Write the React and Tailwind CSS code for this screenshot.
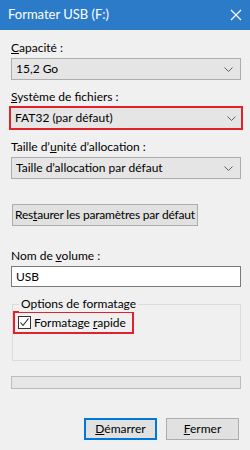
import React from 'react';

const FONT = { fontFamily: 'Lato, "Noto Sans", sans-serif' };

function Chevron() {
  return (
    <svg width="9" height="5" viewBox="0 0 9 5" className="shrink-0">
      <path d="M0.5 0.5 L4.5 4.5 L8.5 0.5" fill="none" stroke="#606060" strokeWidth="1" />
    </svg>
  );
}

function Combo({ children }) {
  return (
    <div className="flex h-[22px] items-center justify-between border border-[#adadad] bg-[#e5e5e5] pl-[4px] pr-[7px] text-[12px] text-black">
      <span className="whitespace-nowrap">{children}</span>
      <Chevron />
    </div>
  );
}

function Label({ children, className = '' }) {
  return <div className={`h-[16px] whitespace-nowrap text-[12px] leading-[16px] text-black ${className}`}>{children}</div>;
}

export default function App() {
  return (
    <div className="flex h-[450px] w-[250px] flex-col bg-[#f0f0f0]" style={FONT}>
      {/* Barre de titre */}
      <div className="flex h-[30px] items-center justify-between bg-[#2b7bc9] pl-[8px] pr-[8px] text-white">
        <span className="text-[13px]">Formater USB (F:)</span>
        <svg width="12" height="12" viewBox="0 0 12 12">
          <path d="M1 1 L11 11 M11 1 L1 11" stroke="white" strokeWidth="1.2" />
        </svg>
      </div>

      <div className="flex flex-col px-[11px] pr-[9px]">
        <Label className="mt-[10px]"><u>C</u>apacité :</Label>
        <div className="mt-[2px]">
          <Combo>15,2 Go</Combo>
        </div>

        <Label className="mt-[9px]"><u>S</u>ystème de fichiers :</Label>
        <div className="-mx-[2px] mt-[1px] border-2 border-[#e0222d]">
          <div className="flex h-[20px] items-center justify-between bg-[#e5e5e5] pl-[4px] pr-[5px] text-[12px] text-black">
            <span>FAT32 (par défaut)</span>
            <Chevron />
          </div>
        </div>

        <Label className="mt-[9px]">Taille d’<u>u</u>nité d’allocation :</Label>
        <div className="mt-[2px]">
          <Combo>Taille d’allocation par défaut</Combo>
        </div>

        <div className="mt-[22px]">
          <button className="ml-[1px] h-[22px] whitespace-nowrap border border-[#adadad] bg-[#e1e1e1] px-[2px] text-[12px] tracking-[-0.2px] text-black">
            Res<u>t</u>aurer les paramètres par défaut
          </button>
        </div>

        <Label className="mt-[22px]">Nom de <u>v</u>olume :</Label>
        <div className="mt-[2px] flex h-[21px] items-center border border-[#7a7a7a] bg-white pl-[4px] text-[12px] text-black">
          USB
        </div>

        {/* Options de formatage */}
        <div className="relative mt-[17px] ml-[1px] h-[57px] border border-[#dcdcdc]">
          <div className="absolute -top-[9px] left-[6px] whitespace-nowrap bg-[#f0f0f0] px-[2px] text-[12px] leading-[16px] text-black">
            Options de formatage
          </div>
          <div className="mt-[6px] flex h-[23px] w-[121px] items-center gap-[3px] border-2 border-[#e0222d] pl-[3px]">
            <div className="flex h-[13px] w-[13px] shrink-0 items-center justify-center border border-[#333] bg-white">
              <svg width="11" height="11" viewBox="0 0 11 11">
                <path d="M1.5 5.5 L4 8.5 L9.5 1.5" fill="none" stroke="#222" strokeWidth="1.1" />
              </svg>
            </div>
            <span className="whitespace-nowrap text-[12px] text-black">Formatage <u>r</u>apide</span>
          </div>
        </div>

        {/* Barre de progression */}
        <div className="mt-[15px] h-[13px] border border-[#bcbcbc] bg-[#e6e6e6]" />

        <div className="mt-[29px] flex justify-end gap-[9px] pr-[2px]">
          <button className="h-[22px] w-[73px] border-2 border-[#0078d7] bg-[#e1e1e1] text-[12px] text-black">
            <u>D</u>émarrer
          </button>
          <button className="h-[22px] w-[73px] border border-[#adadad] bg-[#e1e1e1] text-[12px] text-black">
            <u>F</u>ermer
          </button>
        </div>
      </div>
    </div>
  );
}
